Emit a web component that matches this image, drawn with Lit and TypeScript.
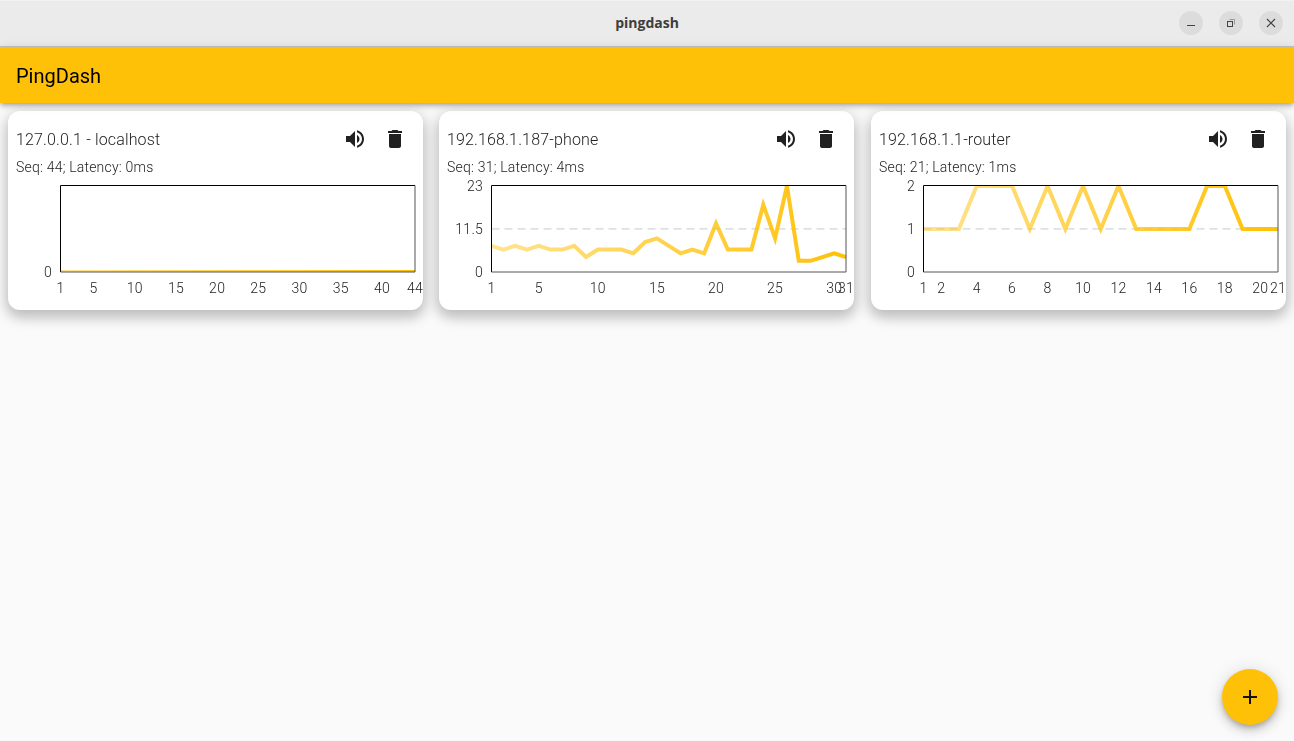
import { LitElement, html, css, svg } from "lit";
import { customElement, property } from "lit/decorators.js";

interface Host {
  name: string;
  seq: number;
  latency: number;
  data: number[];
  xLabels: number[];
  yLabels: number[];
  max: number;
}

const HOSTS: Host[] = [
  {
    name: "127.0.0.1 - localhost",
    seq: 44,
    latency: 0,
    data: new Array(44).fill(0),
    xLabels: [1, 5, 10, 15, 20, 25, 30, 35, 40, 44],
    yLabels: [0],
    max: 1,
  },
  {
    name: "192.168.1.187-phone",
    seq: 31,
    latency: 4,
    data: [7, 6, 7, 6, 7, 6, 6, 7, 4, 6, 6, 6, 5, 8, 9, 7, 5, 6, 5, 13, 6, 6, 6, 18, 9, 23, 3, 3, 4, 5, 4],
    xLabels: [1, 5, 10, 15, 20, 25, 30, 31],
    yLabels: [0, 11.5, 23],
    max: 23,
  },
  {
    name: "192.168.1.1-router",
    seq: 21,
    latency: 1,
    data: [1, 1, 1, 2, 2, 2, 1, 2, 1, 2, 1, 2, 1, 1, 1, 1, 2, 2, 1, 1, 1],
    xLabels: [1, 2, 4, 6, 8, 10, 12, 14, 16, 18, 20, 21],
    yLabels: [0, 1, 2],
    max: 2,
  },
];

const LEFT = 44.5;
const RIGHT = 399;
const TOP = 5.5;
const BOTTOM = 92;
const SPAN = 86;

@customElement("ping-chart")
class PingChart extends LitElement {
  @property({ type: Object }) host!: Host;
  @property({ type: Number }) index = 0;

  static styles = css`
    :host { display: block; height: 122px; }
    svg { display: block; width: 100%; height: 122px; overflow: visible; }
    .frame { fill: none; stroke: #000; stroke-width: 1; }
    .edge { fill: none; stroke: #555; stroke-width: 1; }
    .grid { stroke: #dbe2e6; stroke-width: 1.8; stroke-dasharray: 8 5; }
    .line { fill: none; stroke-width: 4; stroke-linejoin: miter; }
    text { font-family: Roboto, sans-serif; font-size: 14px; font-weight: 300; fill: #222; letter-spacing: 0.25px; }
    .end { text-anchor: end; }
    .mid { text-anchor: middle; }
  `;

  render() {
    const h = this.host;
    const n = h.data.length;
    const px = (i: number) => LEFT + ((RIGHT - LEFT) * i) / (n - 1);
    const py = (v: number) => BOTTOM - (v * SPAN) / h.max;
    const pts = h.data.map((v, i) => `${px(i)},${py(v)}`).join(" ");
    const id = `g${this.index}`;
    const mid = h.yLabels.length === 3 ? py(h.max / 2) - 0.1 : null;
    return html`<svg xmlns="http://www.w3.org/2000/svg">
      <defs>
        <linearGradient id="${id}" gradientUnits="userSpaceOnUse" x1="${LEFT}" y1="0" x2="${RIGHT}" y2="0">
          <stop offset="0" stop-color="#ffc107" stop-opacity="0.45"></stop>
          <stop offset="1" stop-color="#ffc107" stop-opacity="1"></stop>
        </linearGradient>
        <clipPath id="c${id}">
          <rect x="${LEFT}" y="${TOP}" width="${RIGHT - LEFT}" height="${BOTTOM - TOP}"></rect>
        </clipPath>
      </defs>
      ${mid !== null ? svg`<line class="grid" x1="${LEFT}" x2="${RIGHT}" y1="${mid}" y2="${mid}"></line>` : ""}
      <polyline class="line" clip-path="url(#c${id})" stroke="url(#${id})" points="${pts}"></polyline>
      <path class="frame" d="M${RIGHT} ${TOP}H${LEFT}V${BOTTOM}"></path>
      <path class="edge" d="M${LEFT} ${BOTTOM}H${RIGHT}V${TOP}"></path>
      ${h.yLabels.map(
        (v) => svg`<text class="end" x="36" y="${py(v) + 5}">${v}</text>`,
      )}
      ${h.xLabels.map(
        (v) => svg`<text class="mid" x="${px(v - 1)}" y="113">${v}</text>`,
      )}
    </svg>`;
  }
}

@customElement("app-root")
class AppRoot extends LitElement {
  static styles = css`
    :host {
      display: flex;
      flex-direction: column;
      position: relative;
      height: 100vh;
      overflow: hidden;
      background: #fafafa;
      font-family: Roboto, sans-serif;
      color: #222;
    }
    .titlebar {
      flex: none;
      height: 46px;
      box-sizing: border-box;
      border-top: 1px solid #f2f2f2;
      padding: 0 11px 2px 0;
      background: #ebebeb;
      display: flex;
      align-items: center;
      justify-content: flex-end;
      gap: 16px;
      position: relative;
    }
    .titletext {
      position: absolute;
      left: 0;
      right: 0;
      text-align: center;
      font-family: "Open Sans", sans-serif;
      font-weight: 700;
      font-size: 14px;
      color: #3d3d3d;
    }
    .wbtn {
      width: 24px;
      height: 24px;
      border-radius: 50%;
      background: #dcdcdc;
      display: flex;
      align-items: center;
      justify-content: center;
      position: relative;
    }
    .wbtn svg { width: 16px; height: 16px; display: block; }
    .sep { flex: none; height: 1px; background: #c2c2c2; }
    .appbar {
      flex: none;
      height: 56px;
      box-sizing: border-box;
      padding: 2px 16px 0;
      background: #ffc107;
      display: flex;
      align-items: center;
      font-size: 20px;
      color: #000;
      box-shadow: 0 2px 4px -1px rgba(0,0,0,.2), 0 4px 5px rgba(0,0,0,.14), 0 1px 10px rgba(0,0,0,.12);
      position: relative;
      z-index: 1;
    }
    .grid {
      display: grid;
      grid-template-columns: repeat(3, 1fr);
      gap: 16px;
      padding: 8px;
      align-items: start;
    }
    .card {
      background: #fff;
      border-radius: 12px;
      padding: 8px;
      height: 199px;
      box-sizing: border-box;
      will-change: transform;
      box-shadow: 0 5px 14px 2px rgba(0,0,0,.22), 0 8px 16px rgba(0,0,0,.06);
    }
    .head { display: flex; align-items: center; height: 40px; }
    .name { flex: 1; font-size: 16px; font-weight: 300; letter-spacing: 0.15px; color: #222; }
    .ibtn { width: 40px; height: 40px; display: flex; align-items: center; justify-content: center; }
    .ibtn svg { width: 24px; height: 24px; fill: #212121; display: block; }
    .sub { font-size: 14px; font-weight: 300; letter-spacing: 0.2px; line-height: 17px; height: 17px; margin-bottom: 4px; color: #222; }
    .fab {
      position: absolute;
      right: 16px;
      bottom: 16px;
      width: 56px;
      height: 56px;
      border-radius: 50%;
      background: #ffc107;
      display: flex;
      align-items: center;
      justify-content: center;
      box-shadow: 0 3px 5px -1px rgba(0,0,0,.2), 0 6px 10px rgba(0,0,0,.14), 0 1px 18px rgba(0,0,0,.12);
    }
    .fab svg { width: 24px; height: 24px; display: block; }
  `;

  render() {
    return html`
      <div class="titlebar">
        <div class="titletext">pingdash</div>
        <div class="wbtn"><svg viewBox="0 0 16 16"><rect x="4" y="10" width="8" height="1" fill="#444"></rect></svg></div>
        <div class="wbtn"><svg viewBox="0 0 16 16" fill="none" stroke="#444"><rect x="4.5" y="6.5" width="5" height="5"></rect><path d="M6.5 4.5h5v5" stroke="#999"></path></svg></div>
        <div class="wbtn"><svg viewBox="0 0 16 16" fill="none" stroke="#444" stroke-width="1.2"><path d="M4 4l8 8M12 4l-8 8"></path></svg></div>
      </div>
      <div class="sep"></div>
      <div class="appbar">PingDash</div>
      <div class="grid">
        ${HOSTS.map(
          (h, i) => html`<div class="card">
            <div class="head">
              <div class="name">${h.name}</div>
              <div class="ibtn"><svg viewBox="0 0 24 24"><path d="M3 9v6h4l5 5V4L7 9H3zm13.5 3c0-1.77-1.02-3.29-2.5-4.03v8.05c1.48-.73 2.5-2.25 2.5-4.02zM14 3.23v2.06c2.89.86 5 3.54 5 6.71s-2.11 5.85-5 6.71v2.06c4.01-.91 7-4.49 7-8.77s-2.99-7.86-7-8.77z"></path></svg></div>
              <div class="ibtn"><svg viewBox="0 0 24 24"><path d="M6 19c0 1.1.9 2 2 2h8c1.1 0 2-.9 2-2V7H6v12zM19 4h-3.5l-1-1h-5l-1 1H5v2h14V4z"></path></svg></div>
            </div>
            <div class="sub">Seq: ${h.seq}; Latency: ${h.latency}ms</div>
            <ping-chart .host=${h} .index=${i}></ping-chart>
          </div>`,
        )}
      </div>
      <div class="fab"><svg viewBox="0 0 24 24"><path d="M19 13h-6v6h-2v-6H5v-2h6V5h2v6h6v2z" fill="#111"></path></svg></div>
    `;
  }
}
